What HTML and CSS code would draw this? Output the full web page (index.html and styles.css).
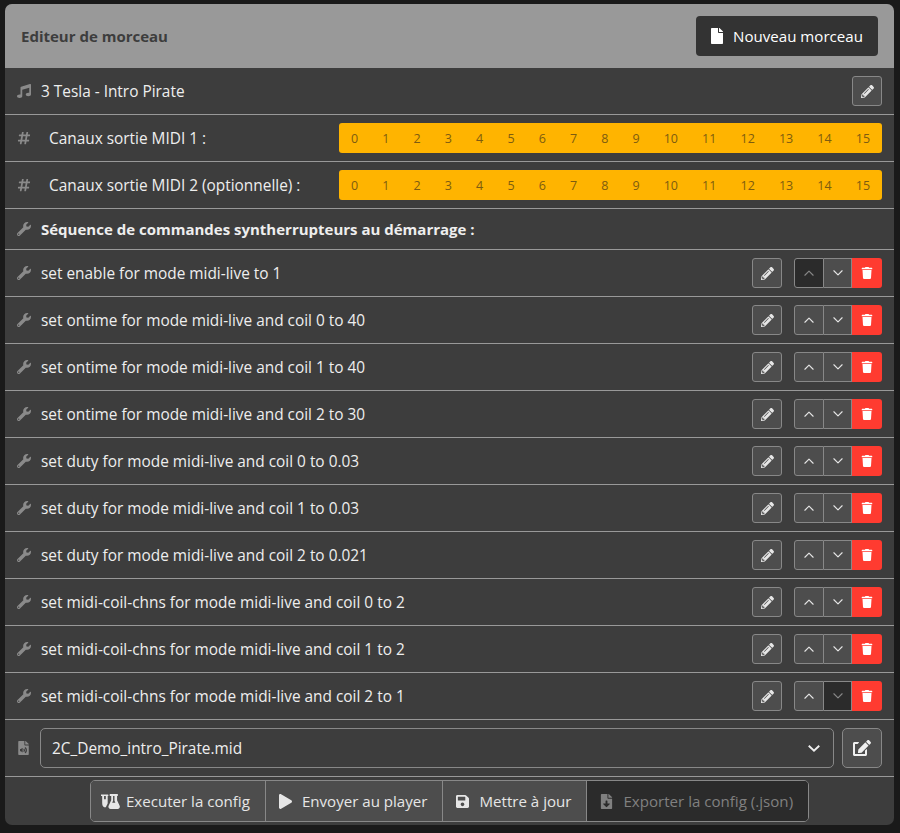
FILE: index.html
```html
<!DOCTYPE html>
<html lang="fr">
<head>
    <meta charset="UTF-8">
    <meta name="viewport" content="width=device-width, initial-scale=1.0">
    <title>Editeur de morceau</title>
    <link rel="stylesheet" href="styles.css">
</head>
<body>
    <!-- Icon sprites -->
    <svg class="sprites" xmlns="http://www.w3.org/2000/svg">
        <symbol id="i-wrench" viewBox="0 0 512 512"><path d="M507.73 109.1c-2.24-9.03-13.54-12.09-20.12-5.51l-74.36 74.36-67.88-11.31-11.31-67.88 74.36-74.36c6.62-6.62 3.43-17.9-5.66-20.16-47.38-11.74-99.55.91-136.58 37.93-39.64 39.64-50.55 97.1-34.05 147.2L18.74 402.76c-24.99 24.99-24.99 65.51 0 90.5 24.99 24.99 65.51 24.99 90.5 0l213.21-213.21c50.12 16.71 107.47 5.68 147.37-34.22 37.07-37.07 49.7-89.32 37.91-136.73zM64 472c-13.25 0-24-10.75-24-24 0-13.26 10.75-24 24-24s24 10.74 24 24c0 13.25-10.75 24-24 24z"/></symbol>
        <symbol id="i-pencil" viewBox="0 0 512 512"><path d="M497.9 142.1l-46.1 46.1c-4.7 4.7-12.3 4.7-17 0l-111-111c-4.7-4.7-4.7-12.3 0-17l46.1-46.1c18.7-18.7 49.1-18.7 67.9 0l60.1 60.1c18.8 18.7 18.8 49.1 0 67.9zM284.2 99.8L21.6 362.4.4 483.9c-2.9 16.4 11.4 30.6 27.8 27.8l121.5-21.3 262.6-262.6c4.7-4.7 4.7-12.3 0-17l-111-111c-4.8-4.7-12.4-4.7-17.1 0zM124.1 339.9c-5.5-5.5-5.5-14.3 0-19.8l154-154c5.5-5.5 14.3-5.5 19.8 0s5.5 14.3 0 19.8l-154 154c-5.5 5.5-14.3 5.5-19.8 0zM88 424h48v36.3l-64.5 11.3-31.1-31.1L51.7 376H88v48z"/></symbol>
        <symbol id="i-music" viewBox="0 0 512 512"><path d="M470.38 1.51L150.41 96A32 32 0 0 0 128 126.51v261.41A139 139 0 0 0 96 384c-53 0-96 28.66-96 64s43 64 96 64 96-28.66 96-64V214.32l256-75v184.61a138.4 138.4 0 0 0-32-3.93c-53 0-96 28.66-96 64s43 64 96 64 96-28.65 96-64V32a32 32 0 0 0-41.62-30.49z"/></symbol>
        <symbol id="i-hash" viewBox="0 0 448 512"><path d="M440.667 182.109l7.143-40c1.313-7.355-4.342-14.109-11.813-14.109h-74.81l14.623-81.891C377.123 38.754 371.468 32 363.997 32h-40.632a12 12 0 0 0-11.813 9.891L296.175 128H197.54l14.623-81.891C213.477 38.754 207.822 32 200.35 32h-40.632a12 12 0 0 0-11.813 9.891L132.528 128H53.432a12 12 0 0 0-11.813 9.891l-7.143 40C33.163 185.246 38.818 192 46.289 192h74.81L98.242 320H19.146a12 12 0 0 0-11.813 9.891l-7.143 40C-1.123 377.246 4.532 384 12.003 384h74.81L72.19 465.891C70.877 473.246 76.532 480 84.003 480h40.632a12 12 0 0 0 11.813-9.891L151.826 384h98.634l-14.623 81.891C234.523 473.246 240.178 480 247.65 480h40.632a12 12 0 0 0 11.813-9.891L315.472 384h79.096a12 12 0 0 0 11.813-9.891l7.143-40c1.313-7.355-4.342-14.109-11.813-14.109h-74.81l22.857-128h79.096a12 12 0 0 0 11.813-9.891zM261.889 320h-98.634l22.857-128h98.634l-22.857 128z"/></symbol>
        <symbol id="i-file" viewBox="0 0 384 512"><path d="M224 136V0H24C10.7 0 0 10.7 0 24v464c0 13.3 10.7 24 24 24h336c13.3 0 24-10.7 24-24V160H248c-13.2 0-24-10.8-24-24zm160-14.1v6.1H256V0h6.1c6.4 0 12.5 2.5 17 7l97.9 98c4.5 4.5 7 10.6 7 16.9z"/></symbol>
        <symbol id="i-trash" viewBox="0 0 448 512"><path d="M432 32H312l-9.4-18.7A24 24 0 0 0 281.1 0H166.8a23.72 23.72 0 0 0-21.4 13.3L136 32H16A16 16 0 0 0 0 48v32a16 16 0 0 0 16 16h416a16 16 0 0 0 16-16V48a16 16 0 0 0-16-16zM53.2 467a48 48 0 0 0 47.9 45h245.8a48 48 0 0 0 47.9-45L416 128H32z"/></symbol>
        <symbol id="i-edit" viewBox="0 0 576 512"><path d="M402.6 83.2l90.2 90.2c3.8 3.8 3.8 10 0 13.8L274.4 405.6l-92.8 10.3c-12.4 1.4-22.9-9.1-21.5-21.5l10.3-92.8L388.8 83.2c3.8-3.8 10-3.8 13.8 0zm162-22.9l-48.8-48.8c-15.2-15.2-39.9-15.2-55.2 0l-35.4 35.4c-3.8 3.8-3.8 10 0 13.8l90.2 90.2c3.8 3.8 10 3.8 13.8 0l35.4-35.4c15.2-15.3 15.2-40 0-55.2zM384 346.2V448H64V128h73.1c3.2 0 6.2-1.3 8.5-3.5l40-40c7.6-7.6 2.2-20.5-8.5-20.5H48C21.5 64 0 85.5 0 112v352c0 26.5 21.5 48 48 48h352c26.5 0 48-21.5 48-48V306.2c0-10.7-12.9-16-20.5-8.5l-40 40c-2.2 2.3-3.5 5.3-3.5 8.5z"/></symbol>
        <symbol id="i-play" viewBox="0 0 448 512"><path d="M424.4 214.7L72.4 6.6C43.8-10.3 0 6.1 0 47.9V464c0 37.5 40.7 60.1 72.4 41.3l352-208c31.4-18.5 31.5-64.1 0-82.6z"/></symbol>
        <symbol id="i-save" viewBox="0 0 448 512"><path d="M433.941 129.941l-83.882-83.882A48 48 0 0 0 316.118 32H48C21.49 32 0 53.49 0 80v352c0 26.51 21.49 48 48 48h352c26.51 0 48-21.49 48-48V163.882a48 48 0 0 0-14.059-33.941zM224 416c-35.346 0-64-28.654-64-64 0-35.346 28.654-64 64-64s64 28.654 64 64c0 35.346-28.654 64-64 64zm96-304.52V212c0 6.627-5.373 12-12 12H76c-6.627 0-12-5.373-12-12V108c0-6.627 5.373-12 12-12h228.52c3.183 0 6.235 1.264 8.485 3.515l3.48 3.48A11.996 11.996 0 0 1 320 111.48z"/></symbol>
        <symbol id="i-download" viewBox="0 0 384 512"><path d="M224 136V0H24C10.7 0 0 10.7 0 24v464c0 13.3 10.7 24 24 24h336c13.3 0 24-10.7 24-24V160H248c-13.2 0-24-10.8-24-24zm76.45 211.36l-96.42 95.7c-6.65 6.61-17.39 6.61-24.04 0l-96.42-95.7C73.42 337.29 80.54 320 94.82 320H160v-80c0-8.84 7.16-16 16-16h32c8.84 0 16 7.16 16 16v80h65.18c14.28 0 21.4 17.29 11.27 27.36zM377 105L279.1 7c-4.5-4.5-10.6-7-17-7H256v128h128v-6.1c0-6.3-2.5-12.4-7-16.9z"/></symbol>
        <symbol id="i-audio" viewBox="0 0 384 512"><path d="M224 136V0H24C10.7 0 0 10.7 0 24v464c0 13.3 10.7 24 24 24h336c13.3 0 24-10.7 24-24V160H248c-13.2 0-24-10.8-24-24zm-64 268c0 10.7-12.9 16-20.5 8.5L104 376H76c-6.6 0-12-5.4-12-12v-56c0-6.6 5.4-12 12-12h28l35.5-36.5c7.6-7.6 20.5-2.2 20.5 8.5v136zm33.2-47.6c9.1-9.3 9.1-24.1 0-33.4-22.1-22.8 12.2-56.2 34.4-33.5 27.2 27.9 27.2 72.4 0 100.4-21.8 22.3-56.9-10.4-34.4-33.5zm86-117.1c54.4 55.9 54.4 144.8 0 200.8-21.8 22.4-56.9-10.4-34.4-33.5 36.2-37.2 36.3-96.5 0-133.8-22.1-22.8 12.3-56.3 34.4-33.5zM384 121.9v6.1H256V0h6.1c6.4 0 12.5 2.5 17 7l97.9 98c4.5 4.5 7 10.6 7 16.9z"/></symbol>
        <symbol id="i-flask" viewBox="0 0 640 512"><path d="M8 16h224c9 0 16 7 16 16v24c0 9-7 16-16 16h-8v232c0 10-2 20-5 29L160 448H100C62 430 36 370 36 304V72H8C-1 72-8 65-8 56V32c0-9 7-16 16-16zm92 56v104h60V72z"/><path d="M312 0h240c13 0 24 10 24 24v16c0 13-11 24-24 24h-8v150l88 186c23 50-10 112-66 112H322c-56 0-89-62-66-112l88-186V64h-32c-13 0-24-11-24-24V24c0-14 11-24 24-24zm96 64v170l-30 66h108l-30-66V64z"/></symbol>
        <symbol id="i-up" viewBox="0 0 16 16"><path d="M2.500 11 8 5.500l5.500 5.500" fill="none" stroke="currentColor" stroke-width="1.500" stroke-linecap="round" stroke-linejoin="round"/></symbol>
        <symbol id="i-down" viewBox="0 0 16 16"><path d="M2.500 5 8 10.500 13.500 5" fill="none" stroke="currentColor" stroke-width="1.500" stroke-linecap="round" stroke-linejoin="round"/></symbol>
    </svg>

    <div class="card">
        <div class="card-header">
            <h1>Editeur de morceau</h1>
            <button class="new-btn"><svg class="ic"><use href="#i-file"/></svg>Nouveau morceau</button>
        </div>

        <div class="row">
            <svg class="row-icon"><use href="#i-music"/></svg>
            <span class="label">3 Tesla - Intro Pirate</span>
            <button class="btn"><svg class="ic"><use href="#i-pencil"/></svg></button>
        </div>

        <!-- MIDI channels -->
        <div class="row">
            <svg class="row-icon"><use href="#i-hash"/></svg>
            <span class="label channel-label">Canaux sortie MIDI 1 :</span>
            <div class="channels">
                <span>0</span><span>1</span><span>2</span><span>3</span><span>4</span><span>5</span><span>6</span><span>7</span><span>8</span><span>9</span><span>10</span><span>11</span><span>12</span><span>13</span><span>14</span><span>15</span>
            </div>
        </div>
        <div class="row">
            <svg class="row-icon"><use href="#i-hash"/></svg>
            <span class="label channel-label">Canaux sortie MIDI 2 (optionnelle) :</span>
            <div class="channels">
                <span>0</span><span>1</span><span>2</span><span>3</span><span>4</span><span>5</span><span>6</span><span>7</span><span>8</span><span>9</span><span>10</span><span>11</span><span>12</span><span>13</span><span>14</span><span>15</span>
            </div>
        </div>

        <!-- Startup commands -->
        <div class="row row-title">
            <svg class="row-icon"><use href="#i-wrench"/></svg>
            <strong class="label">Séquence de commandes syntherrupteurs au démarrage :</strong>
        </div>

        <div class="row">
            <svg class="row-icon"><use href="#i-wrench"/></svg>
            <span class="label">set enable for mode midi-live to 1</span>
            <button class="btn"><svg class="ic"><use href="#i-pencil"/></svg></button>
            <div class="btn-group">
                <button class="btn off"><svg class="ic"><use href="#i-up"/></svg></button>
                <button class="btn"><svg class="ic"><use href="#i-down"/></svg></button>
                <button class="btn danger"><svg class="ic"><use href="#i-trash"/></svg></button>
            </div>
        </div>
        <div class="row">
            <svg class="row-icon"><use href="#i-wrench"/></svg>
            <span class="label">set ontime for mode midi-live and coil 0 to 40</span>
            <button class="btn"><svg class="ic"><use href="#i-pencil"/></svg></button>
            <div class="btn-group">
                <button class="btn"><svg class="ic"><use href="#i-up"/></svg></button>
                <button class="btn"><svg class="ic"><use href="#i-down"/></svg></button>
                <button class="btn danger"><svg class="ic"><use href="#i-trash"/></svg></button>
            </div>
        </div>
        <div class="row">
            <svg class="row-icon"><use href="#i-wrench"/></svg>
            <span class="label">set ontime for mode midi-live and coil 1 to 40</span>
            <button class="btn"><svg class="ic"><use href="#i-pencil"/></svg></button>
            <div class="btn-group">
                <button class="btn"><svg class="ic"><use href="#i-up"/></svg></button>
                <button class="btn"><svg class="ic"><use href="#i-down"/></svg></button>
                <button class="btn danger"><svg class="ic"><use href="#i-trash"/></svg></button>
            </div>
        </div>
        <div class="row">
            <svg class="row-icon"><use href="#i-wrench"/></svg>
            <span class="label">set ontime for mode midi-live and coil 2 to 30</span>
            <button class="btn"><svg class="ic"><use href="#i-pencil"/></svg></button>
            <div class="btn-group">
                <button class="btn"><svg class="ic"><use href="#i-up"/></svg></button>
                <button class="btn"><svg class="ic"><use href="#i-down"/></svg></button>
                <button class="btn danger"><svg class="ic"><use href="#i-trash"/></svg></button>
            </div>
        </div>
        <div class="row">
            <svg class="row-icon"><use href="#i-wrench"/></svg>
            <span class="label">set duty for mode midi-live and coil 0 to 0.03</span>
            <button class="btn"><svg class="ic"><use href="#i-pencil"/></svg></button>
            <div class="btn-group">
                <button class="btn"><svg class="ic"><use href="#i-up"/></svg></button>
                <button class="btn"><svg class="ic"><use href="#i-down"/></svg></button>
                <button class="btn danger"><svg class="ic"><use href="#i-trash"/></svg></button>
            </div>
        </div>
        <div class="row">
            <svg class="row-icon"><use href="#i-wrench"/></svg>
            <span class="label">set duty for mode midi-live and coil 1 to 0.03</span>
            <button class="btn"><svg class="ic"><use href="#i-pencil"/></svg></button>
            <div class="btn-group">
                <button class="btn"><svg class="ic"><use href="#i-up"/></svg></button>
                <button class="btn"><svg class="ic"><use href="#i-down"/></svg></button>
                <button class="btn danger"><svg class="ic"><use href="#i-trash"/></svg></button>
            </div>
        </div>
        <div class="row">
            <svg class="row-icon"><use href="#i-wrench"/></svg>
            <span class="label">set duty for mode midi-live and coil 2 to 0.021</span>
            <button class="btn"><svg class="ic"><use href="#i-pencil"/></svg></button>
            <div class="btn-group">
                <button class="btn"><svg class="ic"><use href="#i-up"/></svg></button>
                <button class="btn"><svg class="ic"><use href="#i-down"/></svg></button>
                <button class="btn danger"><svg class="ic"><use href="#i-trash"/></svg></button>
            </div>
        </div>
        <div class="row">
            <svg class="row-icon"><use href="#i-wrench"/></svg>
            <span class="label">set midi-coil-chns for mode midi-live and coil 0 to 2</span>
            <button class="btn"><svg class="ic"><use href="#i-pencil"/></svg></button>
            <div class="btn-group">
                <button class="btn"><svg class="ic"><use href="#i-up"/></svg></button>
                <button class="btn"><svg class="ic"><use href="#i-down"/></svg></button>
                <button class="btn danger"><svg class="ic"><use href="#i-trash"/></svg></button>
            </div>
        </div>
        <div class="row">
            <svg class="row-icon"><use href="#i-wrench"/></svg>
            <span class="label">set midi-coil-chns for mode midi-live and coil 1 to 2</span>
            <button class="btn"><svg class="ic"><use href="#i-pencil"/></svg></button>
            <div class="btn-group">
                <button class="btn"><svg class="ic"><use href="#i-up"/></svg></button>
                <button class="btn"><svg class="ic"><use href="#i-down"/></svg></button>
                <button class="btn danger"><svg class="ic"><use href="#i-trash"/></svg></button>
            </div>
        </div>
        <div class="row">
            <svg class="row-icon"><use href="#i-wrench"/></svg>
            <span class="label">set midi-coil-chns for mode midi-live and coil 2 to 1</span>
            <button class="btn"><svg class="ic"><use href="#i-pencil"/></svg></button>
            <div class="btn-group">
                <button class="btn"><svg class="ic"><use href="#i-up"/></svg></button>
                <button class="btn off"><svg class="ic"><use href="#i-down"/></svg></button>
                <button class="btn danger"><svg class="ic"><use href="#i-trash"/></svg></button>
            </div>
        </div>

        <!-- MIDI file -->
        <div class="row row-file">
            <svg class="row-icon file-icon"><use href="#i-audio"/></svg>
            <div class="select">
                <span>2C_Demo_intro_Pirate.mid</span>
                <svg class="select-arrow" viewBox="0 0 16 16"><path d="M2 5.500 8 11l6-5.500"/></svg>
            </div>
            <button class="btn btn-lg"><svg class="ic"><use href="#i-edit"/></svg></button>
        </div>

        <div class="actions">
            <div class="action-group">
                <button class="action action-first"><svg class="ic ic-flask"><use href="#i-flask"/></svg>Executer la config</button>
                <button class="action"><svg class="ic"><use href="#i-play"/></svg>Envoyer au player</button>
                <button class="action"><svg class="ic"><use href="#i-save"/></svg>Mettre à jour</button>
                <button class="action disabled"><svg class="ic"><use href="#i-download"/></svg>Exporter la config (.json)</button>
            </div>
        </div>
    </div>
</body>
</html>
```

FILE: styles.css
```css
/* Reset some default styles */
body, h1 {
    margin: 0;
    padding: 0;
}

body {
    font-family: 'Open Sans', 'Noto Sans', sans-serif;
    font-size: 15.4px;
    background-color: #1a1a1a;
    color: #eee;
    padding: 4px 6px 8px 5px;
}

.sprites {
    display: none;
}

.card {
    background-color: #3d3d3d;
    border-radius: 7px;
    overflow: hidden;
}

.card-header {
    background-color: #999;
    height: 64px;
    padding: 0 16px;
    display: flex;
    align-items: center;
    justify-content: space-between;
}

.card-header h1 {
    font-size: 15px;
    font-weight: 700;
    color: #3d3d3d;
}

.new-btn {
    width: 182px;
    height: 40px;
    background-color: #333;
    color: #fff;
    border: none;
    border-radius: 4px;
    font-family: inherit;
    font-size: 15.1px;
    display: flex;
    align-items: center;
    justify-content: center;
    gap: 10px;
}

.new-btn .ic {
    width: 12px;
    height: 16px;
}

.ic {
    width: 13px;
    height: 13px;
    fill: currentColor;
    color: inherit;
}

/* List rows */
.row {
    height: 46px;
    padding: 0 12px;
    display: flex;
    align-items: center;
    border-bottom: 1px solid #999;
}

.row-title {
    height: 40px;
}

.row-title .label {
    font-size: 15px;
}

.row-file {
    height: 56px;
}

.row-icon {
    width: 14px;
    height: 14px;
    fill: #8a8a8a;
    flex-shrink: 0;
    margin-right: 10px;
}

.label {
    flex: 1;
    white-space: nowrap;
}

.channel-label {
    flex: none;
    width: 290px;
    padding-left: 8px;
}

.channels {
    flex: 1;
    height: 30px;
    display: flex;
    align-items: center;
    background-color: #ffb400;
    border-radius: 3px;
    font-size: 12.5px;
    color: #7d5c10;
}

.channels span {
    flex: 1 1 auto;
    text-align: center;
}

/* Buttons */
.btn {
    width: 30px;
    height: 30px;
    padding: 0;
    background-color: #4d4d4d;
    color: #e6e6e6;
    border: 1px solid #888;
    border-radius: 3px;
    display: flex;
    align-items: center;
    justify-content: center;
}

.btn-group {
    display: flex;
    margin-left: 12px;
}

.btn-group .btn {
    width: 28px;
    border-radius: 0;
    border-left-width: 0;
}

.btn-group .btn:first-child {
    width: 30px;
    border-left-width: 1px;
    border-radius: 3px 0 0 3px;
}

.btn-group .btn .ic {
    width: 12px;
    height: 12px;
}

.btn.off {
    background-color: #2b2b2b;
    color: #888;
}

.btn-group .btn.danger {
    width: 30px;
    background-color: #ff3b30;
    border: none;
    color: #fff;
    border-radius: 0 3px 3px 0;
}

.btn-lg {
    width: 40px;
    height: 40px;
    margin-left: 8px;
    border-radius: 5px;
    color: #f0f0f0;
}

.btn-lg .ic {
    width: 18px;
    height: 16px;
}

.select {
    flex: 1;
    height: 38px;
    padding: 0 12px 0 11px;
    border: 1px solid #888;
    border-radius: 5px;
    display: flex;
    align-items: center;
    justify-content: space-between;
}

.select-arrow {
    width: 14px;
    height: 14px;
    fill: none;
    stroke: #eee;
    stroke-width: 2.2;
}

.file-icon {
    width: 11px;
    margin: 0 11px 0 1px;
}

/* Bottom toolbar */
.actions {
    height: 48px;
    display: flex;
    align-items: center;
    justify-content: center;
}

.action-group {
    display: flex;
    height: 40px;
    border: 1px solid #888;
    border-radius: 5px;
    overflow: hidden;
}

.action {
    height: 100%;
    padding: 0 15px 0 13px;
    background-color: #4d4d4d;
    color: #e6e6e6;
    border: none;
    border-right: 1px solid #888;
    font-family: inherit;
    font-size: 15.1px;
    display: flex;
    align-items: center;
    gap: 10px;
}

.action:last-child {
    border-right: none;
}

.action .ic {
    width: 13px;
    height: 15px;
}

.action-first {
    padding-left: 10px;
    gap: 6px;
}

.action .ic-flask {
    width: 19px;
}

.action.disabled {
    background-color: #2b2b2b;
    color: #808080;
}
```
